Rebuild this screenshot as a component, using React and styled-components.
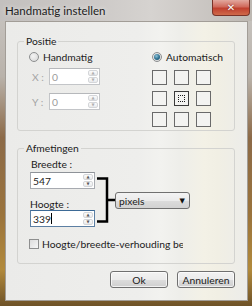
import styled, { createGlobalStyle, css } from "styled-components";

const GlobalStyle = createGlobalStyle`
  html, body {
    margin: 0;
    padding: 0;
    background: #6b5030;
  }
  body {
    font-family: Lato, "Open Sans", sans-serif;
    color: #1b1b1b;
  }
`;

const Window = styled.div`
  width: 252px;
  height: 306px;
  display: flex;
  flex-direction: column;
  overflow: hidden;
  background: linear-gradient(
    180deg,
    #c9c6c3 0%,
    #b9b2aa 25%,
    #8c6a48 45%,
    #9a733c 70%,
    #b28a3c 88%,
    #6e5228 100%
  );
`;

const TitleBar = styled.div`
  height: 21px;
  flex: none;
  display: flex;
  justify-content: space-between;
  align-items: flex-start;
  padding-left: 5px;
  background: linear-gradient(
    90deg,
    #c3c0be 0%,
    #cbc8c6 35%,
    #d6d3d0 60%,
    #c8c4c0 85%,
    #bdb8b2 100%
  );
`;

const Title = styled.span`
  font-size: 11.5px;
  line-height: 22px;
  color: #1c1c1c;
  text-shadow: 0 0 5px rgba(255, 255, 255, 0.8);
`;

const CloseButton = styled.div`
  width: 38px;
  height: 16px;
  margin-right: 2px;
  box-sizing: border-box;
  border: 1px solid #7a3328;
  border-top: none;
  border-radius: 0 0 4px 4px;
  background: linear-gradient(180deg, #e2a89e 0%, #d06a5c 45%, #c0402f 55%, #cf6a4a 100%);
  display: flex;
  align-items: center;
  justify-content: center;
  color: #fff;
  font-family: "DejaVu Sans", sans-serif;
  font-weight: bold;
  font-size: 10px;
  text-shadow: 0 0 2px #6a1c14;
`;

const Client = styled.div`
  flex: 1;
  margin: 0 4px 5px 5px;
  border: 1px solid #a29d97;
  padding: 13px 12px 0 11px;
  display: flex;
  flex-direction: column;
  font-size: 10.3px;
  background: linear-gradient(
    90deg,
    #ebebe9 0%,
    #eeeeec 55%,
    #f2f2ef 64%,
    #eeeeea 72%,
    #f3f1e6 82%,
    #f1efe4 88%,
    #ececea 100%
  );
`;

const Group = styled.fieldset`
  margin: 0;
  margin-top: ${(p) => p.$top || 0}px;
  padding: 0 10px ${(p) => p.$bottom || 0}px;
  min-width: 0;
  border: 1px solid #d3d3d0;
  border-radius: 3px;
`;

const Legend = styled.legend`
  margin-left: -4px;
  padding: 0 2px;
  line-height: 12px;
`;

const PositionGrid = styled.div`
  display: grid;
  grid-template-columns: 124px auto;
  padding-top: 3px;
`;

const Column = styled.div`
  display: flex;
  flex-direction: column;
`;

const RadioRow = styled.label`
  display: flex;
  align-items: center;
  gap: 4px;
  height: 14px;
  padding-left: ${(p) => p.$indent || 0}px;
`;

const Radio = styled.span`
  width: 10px;
  height: 10px;
  box-sizing: border-box;
  border-radius: 50%;
  border: 1px solid #8d8f90;
  background: radial-gradient(circle at 40% 40%, #f4f4f4 0%, #d4d4d4 100%);
  display: flex;
  align-items: center;
  justify-content: center;
  ${(p) =>
    p.$checked &&
    css`
      &::after {
        content: "";
        width: 6px;
        height: 6px;
        border-radius: 50%;
        background: radial-gradient(circle at 40% 35%, #8fc3d8 0%, #2c6f8f 55%, #174a64 100%);
      }
    `}
`;

const FieldRow = styled.div`
  display: flex;
  align-items: center;
  margin-top: ${(p) => p.$top}px;
`;

const AxisLabel = styled.span`
  width: 17px;
  padding-left: 4px;
  color: #a4a4a4;
`;

const TextBox = styled.div`
  width: ${(p) => p.$width}px;
  height: 17px;
  box-sizing: border-box;
  display: flex;
  align-items: stretch;
  background: #fff;
  border: 1px solid ${(p) => (p.$focus ? "#5c7fa3" : p.$disabled ? "#c3c5c8" : "#a7aab0")};
  border-top-color: ${(p) => (p.$focus ? "#3d6a96" : p.$disabled ? "#b6b8bb" : "#8e9298")};
`;

const Value = styled.span`
  flex: 1;
  display: flex;
  align-items: center;
  padding-left: 2px;
  color: ${(p) => (p.$disabled ? "#9a9a9a" : "#1b1b1b")};
`;

const Caret = styled.span`
  width: 1px;
  height: 11px;
  background: #000;
`;

const Spin = styled.div`
  width: 10px;
  display: flex;
  flex-direction: column;
  gap: 1px;
  padding: 1px 1px 1px 0;
`;

const SpinButton = styled.span`
  flex: 1;
  display: flex;
  align-items: center;
  justify-content: center;
  border: 1px solid #d4d6d9;
  border-radius: 2px;
  background: linear-gradient(180deg, #fbfbfb, #e9eaec);
  font-family: "DejaVu Sans", sans-serif;
  font-size: 4px;
  line-height: 1;
  color: ${(p) => (p.$disabled ? "#b0b0b0" : "#5a5a5a")};
`;

const Squares = styled.div`
  display: grid;
  grid-template-columns: repeat(3, 15px);
  grid-auto-rows: 15px;
  gap: 6px 7px;
  margin-top: 6px;
`;

const Square = styled.span`
  box-sizing: border-box;
  border: 1px solid ${(p) => (p.$selected ? "#3a3a3a" : "#6a6a6a")};
  background: #f3f3f1;
  padding: 3px;
  display: flex;
  ${(p) =>
    p.$selected &&
    css`
      &::after {
        content: "";
        flex: 1;
        border: 1px dotted #1a1a1a;
      }
    `}
`;

const SizeArea = styled.div`
  display: flex;
  align-items: flex-start;
  padding-left: 2px;
`;

const SizeFields = styled.div`
  width: 65px;
  display: flex;
  flex-direction: column;
`;

const FieldLabel = styled.span`
  line-height: 12px;
  margin-top: ${(p) => p.$top}px;
  padding-left: ${(p) => p.$indent || 0}px;
  margin-bottom: ${(p) => p.$bottom || 0}px;
`;

const Bracket = styled.svg`
  margin: 23px 0 0 2px;
  flex: none;
`;

const Select = styled.div`
  width: 75px;
  height: 17px;
  margin-top: 38px;
  box-sizing: border-box;
  border: 1px solid #707070;
  border-radius: 3px;
  display: flex;
  align-items: center;
  justify-content: space-between;
  padding: 0 4px 0 3px;
  background: linear-gradient(180deg, #f3f3f3 0%, #ebebeb 50%, #dcdcdc 51%, #d2d2d2 100%);
`;

const Arrow = styled.span`
  font-family: "DejaVu Sans", sans-serif;
  font-size: 7px;
  color: #111;
`;

const CheckRow = styled.label`
  display: flex;
  align-items: center;
  gap: 3px;
  width: 154px;
  margin: 11px 0 13px 1px;
  line-height: 12px;
  white-space: nowrap;
  overflow: hidden;
`;

const Checkbox = styled.span`
  flex: none;
  width: 10px;
  height: 10px;
  box-sizing: border-box;
  border: 1px solid #8e8f8f;
  background: linear-gradient(135deg, #dcdcdc, #f6f6f6);
`;

const ButtonRow = styled.div`
  display: flex;
  justify-content: flex-end;
  gap: 9px;
  margin-top: 7px;
`;

const Button = styled.button`
  width: 58px;
  height: 17px;
  padding: 0;
  border: 1px solid #707070;
  border-radius: 3px;
  font-family: inherit;
  font-size: inherit;
  color: #1b1b1b;
  background: linear-gradient(180deg, #f2f2f2 0%, #ebebeb 50%, #dddddd 51%, #cfcfcf 100%);
  box-shadow: inset 0 0 0 1px rgba(255, 255, 255, 0.7);
`;

function SpinBox({ value, width, disabled, focus }) {
  return (
    <TextBox $width={width} $disabled={disabled} $focus={focus}>
      <Value $disabled={disabled}>
        {value}
        {focus && <Caret />}
      </Value>
      <Spin>
        <SpinButton $disabled={disabled}>▲</SpinButton>
        <SpinButton $disabled={disabled}>▼</SpinButton>
      </Spin>
    </TextBox>
  );
}

export default function App() {
  const squares = Array.from({ length: 9 }, (_, i) => i);

  return (
    <>
      <GlobalStyle />
      <Window>
        <TitleBar>
          <Title>Handmatig instellen</Title>
          <CloseButton>✕</CloseButton>
        </TitleBar>
        <Client>
          <Group $bottom={3}>
            <Legend>Positie</Legend>
            <PositionGrid>
              <Column>
                <RadioRow $indent={1}>
                  <Radio />
                  Handmatig
                </RadioRow>
                <FieldRow $top={4}>
                  <AxisLabel>X :</AxisLabel>
                  <SpinBox value="0" width={51} disabled />
                </FieldRow>
                <FieldRow $top={8}>
                  <AxisLabel>Y :</AxisLabel>
                  <SpinBox value="0" width={51} disabled />
                </FieldRow>
              </Column>
              <Column>
                <RadioRow>
                  <Radio $checked />
                  Automatisch
                </RadioRow>
                <Squares>
                  {squares.map((i) => (
                    <Square key={i} $selected={i === 4} />
                  ))}
                </Squares>
              </Column>
            </PositionGrid>
          </Group>

          <Group $top={11}>
            <Legend>Afmetingen</Legend>
            <SizeArea>
              <SizeFields>
                <FieldLabel $top={4} $indent={1} $bottom={2}>
                  Breedte :
                </FieldLabel>
                <SpinBox value="547" width={65} />
                <FieldLabel $top={9}>Hoogte :</FieldLabel>
                <SpinBox value="339" width={65} focus />
              </SizeFields>
              <Bracket width="18" height="46" viewBox="0 0 18 46">
                <path
                  d="M0 1.5 H10 V44.5 H0 M10 23 H18"
                  fill="none"
                  stroke="#000"
                  strokeWidth="2.5"
                />
              </Bracket>
              <Select>
                pixels
                <Arrow>▼</Arrow>
              </Select>
            </SizeArea>
            <CheckRow>
              <Checkbox />
              Hoogte/breedte-verhouding behouden
            </CheckRow>
          </Group>

          <ButtonRow>
            <Button>Ok</Button>
            <Button>Annuleren</Button>
          </ButtonRow>
        </Client>
      </Window>
    </>
  );
}
